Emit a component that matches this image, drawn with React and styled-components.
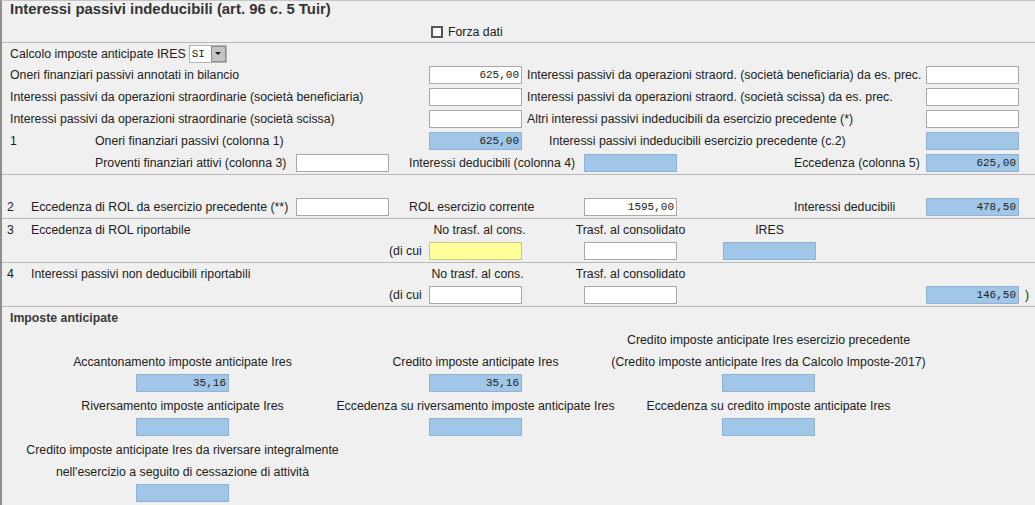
import React from 'react';
import styled, {createGlobalStyle} from 'styled-components';

const GlobalStyle = createGlobalStyle`
  html, body {
    margin: 0;
    padding: 0;
    background: #f0f0f0;
  }
  body {
    font-family: "Liberation Sans", Arial, sans-serif;
    font-size: 12.3px;
    color: #222;
  }
`;

const Page = styled.div`
  width: 1035px;
  height: 505px;
  box-sizing: border-box;
  border-left: 2px solid #8e8e8e;
  border-top: 1px solid #c6c6c6;
  background: #f0f0f0;
  overflow: hidden;
`;

const Title = styled.div`
  height: 16px;
  line-height: 16px;
  padding-left: 8px;
  font-size: 14.9px;
  font-weight: bold;
  color: #333;
`;

const ForzaRow = styled.div`
  height: 25px;
  box-sizing: border-box;
  padding: 5px 0 0 429px;
  display: flex;
  align-items: center;
  gap: 5px;
`;

const CheckBox = styled.span`
  width: 12px;
  height: 12px;
  box-sizing: border-box;
  border: 2px solid #555;
  background: #fafafa;
`;

const Divider = styled.div`
  border-top: 1px solid #b9b9b9;
`;

// shared column lines of the upper form: 7, 10, 31, 95, 296, 389, 409, 429, 527, 549, 584, 723, 794, 926, 1025
const FormRow = styled.div`
  display: grid;
  grid-template-columns: 5px 3px 21px 64px 201px 93px 20px 20px 98px 22px 35px 139px 71px 132px 99px 10px;
  height: ${p => p.$h || 22}px;
  align-items: center;
`;

const Text = styled.span`
  grid-row: 1;
  grid-column-start: ${p => p.$at};
  white-space: nowrap;
`;

const Inline = styled.div`
  grid-row: 1;
  grid-column-start: ${p => p.$at};
  display: flex;
  align-items: center;
  gap: 3px;
  white-space: nowrap;
`;

const ColHead = styled.div`
  grid-row: 1;
  grid-column-start: ${p => p.$at};
  width: 93px;
  display: flex;
  justify-content: center;
  white-space: nowrap;
  padding-left: ${p => p.$shift || 0}px;
  box-sizing: border-box;
`;

const tones = {
  white: {bg: '#ffffff', border: '#a9a9a9'},
  blue: {bg: '#a0c6e8', border: '#90b3d4'},
  yellow: {bg: '#ffff99', border: '#c9c98a'},
};

const Field = styled.div`
  grid-row: 1;
  grid-column-start: ${p => p.$at};
  width: 93px;
  height: 18px;
  box-sizing: border-box;
  border: 1px solid ${p => tones[p.$tone || 'white'].border};
  background: ${p => tones[p.$tone || 'white'].bg};
  font-family: "Liberation Mono", "Courier New", monospace;
  font-size: 11px;
  line-height: 16px;
  text-align: right;
  padding-right: 2px;
  color: #222;
`;

const Select = styled.div`
  display: flex;
  height: 18px;
  box-sizing: border-box;
  border: 1px solid #b4b4b4;
  background: #fff;
`;

const SelectValue = styled.span`
  width: 19px;
  padding-left: 2px;
  font-family: "Liberation Mono", "Courier New", monospace;
  font-size: 11px;
  line-height: 16px;
`;

const SelectButton = styled.span`
  width: 15px;
  box-sizing: border-box;
  border: 1px solid #8c8c8c;
  background: #c4c4c4;
  display: flex;
  align-items: center;
  justify-content: center;
`;

const Arrow = styled.span`
  width: 0;
  height: 0;
  border-left: 3px solid transparent;
  border-right: 3px solid transparent;
  border-top: 3px solid #111;
`;

const SectionHead = styled.div`
  height: 22px;
  line-height: 22px;
  padding-left: 8px;
  font-weight: bold;
  color: #3a3a3a;
`;

const Panel = styled.div`
  display: grid;
  grid-template-columns: repeat(3, 293px);
  padding-left: 34px;
  align-items: end;
`;

const Stack = styled.div`
  display: flex;
  flex-direction: column;
  align-items: center;
`;

const Caption = styled.div`
  height: 22px;
  line-height: 22px;
  white-space: nowrap;
`;

const Slot = styled.div`
  height: 22px;
  padding-top: 1px;
  box-sizing: border-box;
`;

const Cell = ({lines, value}) => (
  <Stack>
    {lines.map(l => <Caption key={l}>{l}</Caption>)}
    <Slot><Field $tone="blue">{value}</Field></Slot>
  </Stack>
);

const App = () => {
  return (
    <Page>
      <GlobalStyle/>
      <Title>Interessi passivi indeducibili (art. 96 c. 5 Tuir)</Title>
      <ForzaRow>
        <CheckBox/>
        <span>Forza dati</span>
      </ForzaRow>
      <Divider/>

      <FormRow $h={21}>
        <Inline $at={3}>
          Calcolo imposte anticipate IRES
          <Select>
            <SelectValue>SI</SelectValue>
            <SelectButton><Arrow/></SelectButton>
          </Select>
        </Inline>
      </FormRow>
      <FormRow>
        <Text $at={3}>Oneri finanziari passivi annotati in bilancio</Text>
        <Field $at={9}>625,00</Field>
        <Text $at={10}>Interessi passivi da operazioni straord. (società beneficiaria) da es. prec.</Text>
        <Field $at={15}/>
      </FormRow>
      <FormRow>
        <Text $at={3}>Interessi passivi da operazioni straordinarie (società beneficiaria)</Text>
        <Field $at={9}/>
        <Text $at={10}>Interessi passivi da operazioni straord. (società scissa) da es. prec.</Text>
        <Field $at={15}/>
      </FormRow>
      <FormRow>
        <Text $at={3}>Interessi passivi da operazioni straordinarie (società scissa)</Text>
        <Field $at={9}/>
        <Text $at={10}>Altri interessi passivi indeducibili da esercizio precedente (*)</Text>
        <Field $at={15}/>
      </FormRow>
      <FormRow>
        <Text $at={3}>1</Text>
        <Text $at={5}>Oneri finanziari passivi (colonna 1)</Text>
        <Field $at={9} $tone="blue">625,00</Field>
        <Text $at={11}>Interessi passivi indeducibili esercizio precedente (c.2)</Text>
        <Field $at={15} $tone="blue"/>
      </FormRow>
      <FormRow>
        <Text $at={5}>Proventi finanziari attivi (colonna 3)</Text>
        <Field $at={6}/>
        <Text $at={8}>Interessi deducibili (colonna 4)</Text>
        <Field $at={12} $tone="blue"/>
        <Text $at={14}>Eccedenza (colonna 5)</Text>
        <Field $at={15} $tone="blue">625,00</Field>
      </FormRow>
      <Divider/>

      <FormRow $h={21}/>
      <FormRow>
        <Text $at={2}>2</Text>
        <Text $at={4}>Eccedenza di ROL da esercizio precedente (**)</Text>
        <Field $at={6}/>
        <Text $at={8}>ROL esercizio corrente</Text>
        <Field $at={12}>1595,00</Field>
        <Text $at={14}>Interessi deducibili</Text>
        <Field $at={15} $tone="blue">478,50</Field>
      </FormRow>
      <Divider/>

      <FormRow $h={21}>
        <Text $at={2}>3</Text>
        <Text $at={4}>Eccedenza di ROL riportabile</Text>
        <ColHead $at={9} $shift={8}>No trasf. al cons.</ColHead>
        <ColHead $at={12}>Trasf. al consolidato</ColHead>
        <ColHead $at={13}>IRES</ColHead>
      </FormRow>
      <FormRow>
        <Text $at={7}>(di cui</Text>
        <Field $at={9} $tone="yellow"/>
        <Field $at={12}/>
        <Field $at={13} $tone="blue"/>
      </FormRow>
      <Divider/>

      <FormRow $h={21}>
        <Text $at={2}>4</Text>
        <Text $at={4}>Interessi passivi non deducibili riportabili</Text>
        <ColHead $at={9} $shift={4}>No trasf. al cons.</ColHead>
        <ColHead $at={12}>Trasf. al consolidato</ColHead>
      </FormRow>
      <FormRow>
        <Text $at={7}>(di cui</Text>
        <Field $at={9}/>
        <Field $at={12}/>
        <Field $at={15} $tone="blue">146,50</Field>
        <Text $at={16}>)</Text>
      </FormRow>
      <Divider/>

      <SectionHead>Imposte anticipate</SectionHead>
      <Panel>
        <Cell lines={['Accantonamento imposte anticipate Ires']} value="35,16"/>
        <Cell lines={['Credito imposte anticipate Ires']} value="35,16"/>
        <Cell lines={['Credito imposte anticipate Ires esercizio precedente', '(Credito imposte anticipate Ires da Calcolo Imposte-2017)']}/>
        <Cell lines={['Riversamento imposte anticipate Ires']}/>
        <Cell lines={['Eccedenza su riversamento imposte anticipate Ires']}/>
        <Cell lines={['Eccedenza su credito imposte anticipate Ires']}/>
        <Cell lines={['Credito imposte anticipate Ires da riversare integralmente', "nell'esercizio a seguito di cessazione di attività"]}/>
      </Panel>
    </Page>
  );
};

export default App;
